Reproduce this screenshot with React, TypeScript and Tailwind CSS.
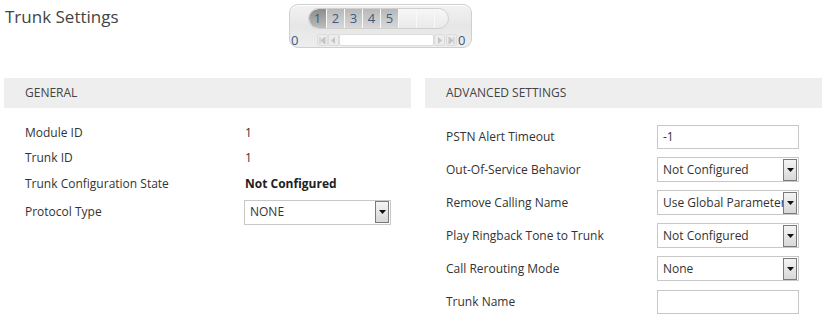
import type { ReactNode } from "react";

const leftRows = [
  { label: "Module ID", value: "1" },
  { label: "Trunk ID", value: "1" },
  { label: "Trunk Configuration State", value: "Not Configured", bold: true },
];

const advanced: { label: string; kind: "input" | "select"; value: string }[] = [
  { label: "PSTN Alert Timeout", kind: "input", value: "-1" },
  { label: "Out-Of-Service Behavior", kind: "select", value: "Not Configured" },
  { label: "Remove Calling Name", kind: "select", value: "Use Global Parameter" },
  { label: "Play Ringback Tone to Trunk", kind: "select", value: "Not Configured" },
  { label: "Call Rerouting Mode", kind: "select", value: "None" },
  { label: "Trunk Name", kind: "input", value: "" },
];

const FakeSelect = ({ value, className }: { value: string; className: string }) => (
  <div className={`flex items-center border border-[#c8c8c8] bg-white h-[25px] ${className}`}>
    <span className="flex-1 overflow-hidden whitespace-nowrap pl-[5px] text-[12px] text-[#333]">{value}</span>
    <span className="flex items-center justify-center w-[14px] h-[22px] mr-[1px] border border-[#7a7a7a] bg-gradient-to-b from-[#f4f4f4] to-[#d8d8d8]">
      <svg width="7" height="4" viewBox="0 0 7 4">
        <path d="M0 0h7L3.5 4z" fill="#111" />
      </svg>
    </span>
  </div>
);

const FakeInput = ({ value }: { value: string }) => (
  <div className="flex items-center border border-[#c8c8c8] bg-white h-[24px] w-[142px]">
    <span className="pl-[5px] text-[12px] text-[#333]">{value}</span>
  </div>
);

const NavBtn = ({ children }: { children: ReactNode }) => (
  <span className="flex items-center justify-center w-[11px] h-[12px] rounded-[2px] border border-[#dcdcdc] bg-[#ececec]">
    {children}
  </span>
);

const Pager = () => (
  <div className="w-[183px] h-[44px] mt-[4px] rounded-[9px] border border-[#cfcfcf] bg-gradient-to-b from-[#f2f2f2] via-[#e6e6e6] to-[#eeeeee] shadow-[inset_0_1px_0_#fff]">
    <div className="flex h-[21px] ml-[18px] mt-[3px] w-[141px] rounded-full border border-[#d0d0d0] bg-gradient-to-b from-[#f7f7f7] to-[#e9e9e9] overflow-hidden">
      {["1", "2", "3", "4", "5", "", "", ""].map((n, i) => (
        <span
          key={i}
          className={`flex items-center justify-center h-full text-[13px] text-[#3d5a80] border-r border-[#f8f8f8] ${
            i === 0
              ? "w-[18px] rounded-l-full bg-gradient-to-b from-[#8c8c8c] to-[#bcbcbc]"
              : i < 5
              ? "w-[18px] bg-gradient-to-b from-[#b8b8b8] to-[#d8d8d8]"
              : i < 7
              ? "w-[18px]"
              : "flex-1 border-r-0"
          }`}
        >
          {n}
        </span>
      ))}
    </div>
    <div className="flex items-center h-[14px] mt-[4px]">
      <span className="w-[27px] pl-[1px] text-[13px] leading-none text-[#3d5a80]">0</span>
      <NavBtn>
        <svg width="7" height="7" viewBox="0 0 7 7">
          <path d="M1 0v7M6 0v7L2 3.5z" stroke="#c4c4c4" fill="#c4c4c4" strokeWidth="1" />
        </svg>
      </NavBtn>
      <NavBtn>
        <svg width="5" height="7" viewBox="0 0 5 7">
          <path d="M4 0v7L0 3.5z" fill="#c4c4c4" />
        </svg>
      </NavBtn>
      <span className="w-[95px] h-[12px] rounded-[2px] border border-[#dcdcdc] bg-white" />
      <NavBtn>
        <svg width="5" height="7" viewBox="0 0 5 7">
          <path d="M1 0v7L5 3.5z" fill="#c4c4c4" />
        </svg>
      </NavBtn>
      <span className="w-[1px]" />
      <NavBtn>
        <svg width="7" height="7" viewBox="0 0 7 7">
          <path d="M6 0v7M1 0v7L5 3.5z" stroke="#c4c4c4" fill="#c4c4c4" strokeWidth="1" />
        </svg>
      </NavBtn>
      <span className="pl-[1px] text-[13px] leading-none text-[#3d5a80]">0</span>
    </div>
  </div>
);

const App = () => {
  return (
    <div className="w-[822px] h-[319px] overflow-hidden bg-white font-['Open_Sans',sans-serif] text-[#333]">
      <div className="flex h-[48px]">
        <h1 className="w-[289px] pl-[5px] pt-[5px] text-[17px] text-[#444] leading-[24px]">Trunk Settings</h1>
        <Pager />
      </div>
      <div className="flex mt-[30px]">
        <div className="w-[407px] ml-[4px]">
          <div className="h-[30px] bg-[#eeeeee] pl-[21px] flex items-center text-[12px] text-[#444]">GENERAL</div>
          <div className="pl-[21px] pt-[12px]">
            {leftRows.map((r) => (
              <div key={r.label} className="flex items-center h-[25.5px] text-[12px]">
                <span className="w-[220px]">{r.label}</span>
                <span className={r.bold ? "font-bold text-[#222]" : ""}>{r.value}</span>
              </div>
            ))}
            <div className="flex items-center h-[29px] mt-[1px] text-[12px]">
              <span className="w-[219px]">Protocol Type</span>
              <FakeSelect value="NONE" className="w-[147px]" />
            </div>
          </div>
        </div>
        <div className="flex-1 ml-[14px]">
          <div className="h-[30px] bg-[#eeeeee] pl-[21px] flex items-center text-[12px] text-[#444]">ADVANCED SETTINGS</div>
          <div className="pl-[21px] pt-[12px]">
            {advanced.map((r) => (
              <div key={r.label} className="flex items-center h-[33px] text-[12px]">
                <span className="w-[211px]">{r.label}</span>
                {r.kind === "input" ? <FakeInput value={r.value} /> : <FakeSelect value={r.value} className="w-[142px]" />}
              </div>
            ))}
          </div>
        </div>
      </div>
    </div>
  );
};

export default App;
